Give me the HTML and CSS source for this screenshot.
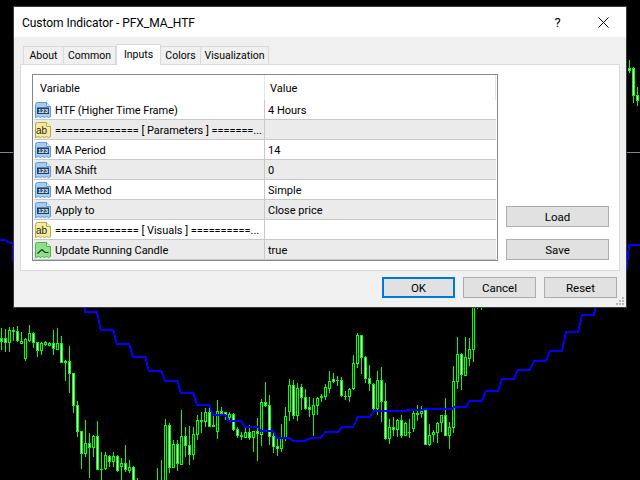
FILE: index.html
```html
<!DOCTYPE html>
<html lang="en">
<head>
<meta charset="utf-8">
<title>Custom Indicator - PFX_MA_HTF</title>
<link rel="stylesheet" href="styles.css">
</head>
<body>
<svg class="chart" viewBox="0 0 1920 1440" aria-hidden="true">
  <defs>
    <symbol id="page-num" viewBox="0 0 16 16">
      <path class="icon-num-page" d="M.5 2.5a2 2 0 0 1 2-2h9l4 4v10l-2 1-2-1-2 1-2-1-2 1-2-1-3 1z"/>
      <path class="icon-num-fold" d="M11.500 .5v4h4"/>
      <rect class="icon-num-plate" x="2" y="5.500" width="12" height="6.500"/>
    </symbol>
    <symbol id="page-str" viewBox="0 0 16 16">
      <path class="icon-str-page" d="M.5 2.5a2 2 0 0 1 2-2h9l4 4v10l-2 1-2-1-2 1-2-1-2 1-2-1-3 1z"/>
      <path class="icon-str-fold" d="M11.500 .5v4h4"/>
    </symbol>
    <symbol id="page-bool" viewBox="0 0 16 16">
      <path class="icon-bool-page" d="M.5 2.5a2 2 0 0 1 2-2h9l4 4v10l-2 1-2-1-2 1-2-1-2 1-2-1-3 1z"/>
      <path class="icon-bool-fold" d="M11.500 .5v4h4"/>
      <path class="icon-bool-mark" d="M2.500 11.500l4.500-4 3 3h3.500"/>
    </symbol>
  </defs>
  <path class="level" d="M0 457.5H1920"/>
  <g transform="translate(0 900)">
    <path class="wick" d="M4.5 84V150M16.5 87V157M28.5 80V155M40.5 80V122M52.5 78V126M64.5 96V132M76.5 115V182M88.5 75V125M100.5 97V145M112.5 125V170M124.5 125V165M136.5 122V137M148.5 125V137M160.5 90V165M172.5 84V150M184.5 108V188M196.5 180V243M208.5 138V278M220.5 218V340M232.5 304V412M244.5 393V506M256.5 360V470M268.5 400V533M280.5 405V470M292.5 363V510M304.5 455V540M316.5 455V510M328.5 465V500M340.5 455V500M352.5 465V515M364.5 475V540M376.5 435V515M388.5 480V520M400.5 498V540M412.5 535V540M472.5 505V540M484.5 480V540M496.5 357V540M508.5 370V520M520.5 420V505M532.5 420V512M544.5 330V495M556.5 380V470M568.5 378V495M580.5 380V480M592.5 345V420M604.5 335V400M616.5 325V380M628.5 315V380M640.5 345V380M652.5 300V417M664.5 320V345M676.5 336V360M688.5 335V360M700.5 338V392M712.5 382V415M724.5 395V420M736.5 378V415M748.5 375V420M760.5 392V456M772.5 355V482M784.5 297V438M796.5 247V320M808.5 285V435M820.5 400V458M832.5 415V467M844.5 373V455M856.5 320V424M868.5 237V362M880.5 240V358M892.5 250V362M904.5 252V330M916.5 268V330M928.5 292V350M940.5 293V408M952.5 290V345M964.5 282V305M976.5 252V300M988.5 213V280M1000.5 220V250M1012.5 228V258M1024.5 232V290M1036.5 274V300M1048.5 265V306M1060.5 165V270M1072.5 99V205M1084.5 105V222M1096.5 168V250M1108.5 195V272M1120.5 250V330M1132.5 213V345M1144.5 202V365M1156.5 250V420M1168.5 357V432M1180.5 352V408M1192.5 358V411M1204.5 345V413M1216.5 365V408M1228.5 357V414M1240.5 333V395M1252.5 315V362M1264.5 318V354M1276.5 330V435M1288.5 372V437M1300.5 390V425M1312.5 365V430M1324.5 345V395M1336.5 294V408M1348.5 365V446M1360.5 198V398M1372.5 111V267M1384.5 160V270M1396.5 111V228M1408.5 114V198M1420.5 0V186M1432.5 0V27M1444.5 0V30M1888.5 -720V-682M1900.5 -700V-590M1912.5 -638V-582"/>
    <path class="body-hollow" d="M25.5 92h6v36h-6zM61.5 123h6v8h-6zM73.5 118h6v58h-6zM85.5 100h6v20h-6zM121.5 130h6v22h-6zM133.5 126h6v8h-6zM145.5 130h6v5h-6zM169.5 130h6v17h-6zM253.5 430h6v30h-6zM277.5 408h6v35h-6zM313.5 466h6v40h-6zM337.5 468h6v17h-6zM361.5 490h6v10h-6zM385.5 502h6v8h-6zM493.5 375h6v170h-6zM517.5 432h6v70h-6zM541.5 408h6v85h-6zM577.5 403h6v60h-6zM589.5 360h6v43h-6zM613.5 336h6v29h-6zM649.5 335h6v60h-6zM685.5 343h6v9h-6zM733.5 397h6v14h-6zM757.5 394h6v18h-6zM781.5 306h6v97h-6zM841.5 415h6v30h-6zM853.5 350h6v64h-6zM865.5 256h6v79h-6zM889.5 265h6v81h-6zM937.5 317h6v26h-6zM949.5 295h6v22h-6zM973.5 262h6v28h-6zM985.5 244h6v22h-6zM1045.5 268h6v22h-6zM1057.5 190h6v76h-6zM1069.5 106h6v84h-6zM1129.5 241h6v85h-6zM1165.5 382h6v34h-6zM1189.5 361h6v28h-6zM1213.5 370h6v36h-6zM1237.5 340h6v46h-6zM1261.5 334h6v7h-6zM1285.5 406h6v28h-6zM1297.5 397h6v6h-6zM1309.5 370h6v27h-6zM1321.5 347h6v21h-6zM1345.5 383h6v23h-6zM1357.5 244h6v138h-6zM1369.5 163h6v81h-6zM1393.5 172h6v54h-6zM1405.5 148h6v28h-6zM1417.5 0h6v148h-6z"/>
    <path class="body-solid" d="M1.5 115h6v10h-6zM13.5 115h6v13h-6zM37.5 90h6v5h-6zM49.5 95h6v27h-6zM97.5 100h6v28h-6zM109.5 127h6v25h-6zM157.5 130h6v16h-6zM181.5 130h6v58h-6zM193.5 184h6v4h-6zM205.5 184h6v36h-6zM217.5 220h6v97h-6zM229.5 317h6v78h-6zM241.5 394h6v66h-6zM265.5 430h6v13h-6zM289.5 408h6v100h-6zM301.5 507h6v2h-6zM325.5 468h6v17h-6zM349.5 468h6v44h-6zM373.5 490h6v18h-6zM397.5 502h6v43h-6zM505.5 375h6v127h-6zM529.5 432h6v58h-6zM553.5 408h6v28h-6zM565.5 436h6v27h-6zM601.5 360h6v5h-6zM625.5 336h6v44h-6zM637.5 376h6v4h-6zM661.5 334h6v6h-6zM673.5 337h6v8h-6zM697.5 344h6v44h-6zM709.5 388h6v19h-6zM721.5 405h6v5h-6zM745.5 397h6v16h-6zM769.5 394h6v6h-6zM793.5 307h6v8h-6zM805.5 317h6v92h-6zM817.5 409h6v31h-6zM829.5 440h6v6h-6zM877.5 256h6v89h-6zM901.5 262h6v31h-6zM913.5 293h6v32h-6zM925.5 322h6v7h-6zM961.5 288h6v4h-6zM997.5 238h6v7h-6zM1009.5 240h6v2h-6zM1021.5 241h6v46h-6zM1033.5 288h6v2h-6zM1081.5 106h6v66h-6zM1093.5 172h6v64h-6zM1105.5 236h6v14h-6zM1117.5 253h6v73h-6zM1141.5 241h6v63h-6zM1153.5 304h6v112h-6zM1177.5 382h6v6h-6zM1201.5 361h6v46h-6zM1225.5 396h6v2h-6zM1249.5 340h6v2h-6zM1273.5 332h6v102h-6zM1333.5 347h6v59h-6zM1381.5 163h6v61h-6zM1885.5 -696h6v8h-6zM1897.5 -695h6v82h-6zM1909.5 -613h6v15h-6z"/>
    <path class="trend" d="M0 -180H15L30 -171H39L42 -60M254 0V36H290L296 60L302 90H340L350 132H388L398 170H436L446 212H484L494 242H532L542 278H580L590 314H628L638 344H676L686 362H724L734 380H772L782 392H820L830 413H868L878 422H916L932 414H960L976 396H1014L1026 380H1060L1074 350H1110L1122 332H1218L1220 329H1266L1270 326H1356L1366 320H1398L1410 302H1446L1458 272H1494L1506 236H1542L1554 210H1590L1602 182H1638L1650 152H1686L1698 96H1734L1746 44H1782L1786 22L1790 0L1878 -75L1887 -165H1920"/>
  </g>
</svg>

<main class="dialog">
  <header class="titlebar">
    <span class="title">Custom Indicator - PFX_MA_HTF</span>
    <span class="caption-btn help">?</span>
    <span class="caption-btn close">
      <svg class="close-glyph" viewBox="0 0 11 11" aria-hidden="true"><path d="M.5 .5l10 10M10.500 .5l-10 10"/></svg>
    </span>
  </header>

  <nav class="tabs">
    <span class="tab tab-about">About</span>
    <span class="tab tab-common">Common</span>
    <span class="tab tab-inputs active">Inputs</span>
    <span class="tab tab-colors">Colors</span>
    <span class="tab tab-vis">Visualization</span>
  </nav>

  <section class="panel">
    <div class="list">
      <div class="list-head">
        <span class="head-cell head-var">Variable</span>
        <span class="head-cell head-val">Value</span>
      </div>
      <div class="row">
        <span class="name"><svg class="icon" viewBox="0 0 16 16"><use href="#page-num"/><text class="icon-num-text" x="8" y="10.800">123</text></svg>HTF (Higher Time Frame)</span>
        <span class="value">4 Hours</span>
      </div>
      <div class="row alt">
        <span class="name"><svg class="icon" viewBox="0 0 16 16"><use href="#page-str"/><text class="icon-str-text" x="6.500" y="11.500">ab</text></svg>============== [ Parameters ] =======...</span>
        <span class="value"></span>
      </div>
      <div class="row">
        <span class="name"><svg class="icon" viewBox="0 0 16 16"><use href="#page-num"/><text class="icon-num-text" x="8" y="10.800">123</text></svg>MA Period</span>
        <span class="value">14</span>
      </div>
      <div class="row alt">
        <span class="name"><svg class="icon" viewBox="0 0 16 16"><use href="#page-num"/><text class="icon-num-text" x="8" y="10.800">123</text></svg>MA Shift</span>
        <span class="value">0</span>
      </div>
      <div class="row">
        <span class="name"><svg class="icon" viewBox="0 0 16 16"><use href="#page-num"/><text class="icon-num-text" x="8" y="10.800">123</text></svg>MA Method</span>
        <span class="value">Simple</span>
      </div>
      <div class="row alt">
        <span class="name"><svg class="icon" viewBox="0 0 16 16"><use href="#page-num"/><text class="icon-num-text" x="8" y="10.800">123</text></svg>Apply to</span>
        <span class="value">Close price</span>
      </div>
      <div class="row">
        <span class="name"><svg class="icon" viewBox="0 0 16 16"><use href="#page-str"/><text class="icon-str-text" x="6.500" y="11.500">ab</text></svg>============== [ Visuals ] ==========...</span>
        <span class="value"></span>
      </div>
      <div class="row alt">
        <span class="name"><svg class="icon" viewBox="0 0 16 16"><use href="#page-bool"/></svg>Update Running Candle</span>
        <span class="value">true</span>
      </div>
    </div>
    <div class="side">
      <button class="btn side-btn" type="button">Load</button>
      <button class="btn side-btn" type="button">Save</button>
    </div>
  </section>

  <footer class="actions">
    <button class="btn act-btn default" type="button">OK</button>
    <button class="btn act-btn" type="button">Cancel</button>
    <button class="btn act-btn" type="button">Reset</button>
  </footer>

  <svg class="grip" viewBox="0 0 9 9" aria-hidden="true"><path d="M6 0h2v2h-2zM3 3h2v2h-2zM6 3h2v2h-2zM0 6h2v2h-2zM3 6h2v2h-2zM6 6h2v2h-2z"/></svg>
</main>
</body>
</html>
```

FILE: styles.css
```css
* { box-sizing: border-box; }

html, body {
  margin: 0;
  height: 100%;
  background: #000;
  overflow: hidden;
}

body {
  position: relative;
  font: 11px/1 Roboto, "Liberation Sans", sans-serif;
  color: #000;
}

.chart {
  position: absolute;
  left: 0;
  top: 0;
  width: 640px;
  height: 480px;
  shape-rendering: crispEdges;
}

.level { stroke: #778899; stroke-width: 3; fill: none; }
.wick { stroke: #00ff00; stroke-width: 3; fill: none; }
.body-hollow { stroke: #00ff00; stroke-width: 3; fill: #000; }
.body-solid { stroke: #00ff00; stroke-width: 3; fill: #fff; }
.trend { stroke: #0000ff; stroke-width: 6; fill: none; stroke-linejoin: miter; }

.dialog {
  position: absolute;
  left: 14px;
  top: 7px;
  width: 612px;
  height: 300px;
  background: #f0f0f0;
  box-shadow: 0 0 0 1px #3c3c3c;
  display: flex;
  flex-direction: column;
}

.titlebar {
  height: 30px;
  background: #fff;
  display: flex;
  align-items: center;
  flex: none;
}

.title {
  flex: 1;
  padding: 1px 0 0 8px;
  font-size: 12px;
  letter-spacing: -.05px;
}

.caption-btn {
  width: 45px;
  height: 30px;
  display: flex;
  align-items: center;
  justify-content: center;
}

.help { font-size: 13px; margin-right: 1px; }

.close-glyph {
  width: 11px;
  height: 11px;
  stroke: #000;
  stroke-width: 1;
  fill: none;
}

.tabs {
  display: flex;
  align-items: flex-end;
  height: 20px;
  margin: 7px 0 0 9px;
  position: relative;
  z-index: 1;
  flex: none;
}

.tab {
  height: 18px;
  padding-top: 2px;
  border: 1px solid #d9d9d9;
  border-bottom: 0;
  border-left-width: 0;
  display: flex;
  align-items: center;
  justify-content: center;
  background: #f0f0f0;
  font-size: 10.500px;
}

.tab-about { width: 41px; border-left-width: 1px; }
.tab-common { width: 52px; }
.tab-inputs { width: 45px; }
.tab-colors { width: 40px; }
.tab-vis { width: 68px; }

.tab.active {
  height: 21px;
  margin-bottom: -1px;
  padding: 1px 0 0;
  background: #fff;
  border-left-width: 1px;
}

.panel {
  height: 207px;
  margin: 0 6px;
  padding: 9px 10px 9px 11px;
  border: 1px solid #d9d9d9;
  background: #fff;
  display: flex;
  gap: 8px;
  flex: none;
}

.list {
  width: 466px;
  height: 187px;
  border: 1px solid #828790;
  padding: 0 1px;
  background: #fff;
  flex: none;
}

.list-head {
  height: 25px;
  display: grid;
  grid-template-columns: 231px 1fr;
  align-items: stretch;
}

.head-cell {
  display: flex;
  align-items: center;
  padding-top: 2px;
  border-right: 1px solid #e5e5e5;
}

.head-var { padding-left: 6px; }
.head-val { padding-left: 5px; }

.row {
  height: 20px;
  display: grid;
  grid-template-columns: 231px 1fr;
  border-bottom: 1px solid #c8c8c8;
}

.row.alt { background: #ebebeb; }

.name {
  display: flex;
  align-items: center;
  gap: 4px;
  padding: 2px 0 0 1px;
  border-right: 1px solid #c8c8c8;
  white-space: nowrap;
  overflow: hidden;
  letter-spacing: -.05px;
}

.value {
  display: flex;
  align-items: center;
  padding: 2px 0 0 3px;
}

.icon {
  width: 16px;
  height: 16px;
  margin-top: -1px;
  flex: none;
}

.icon-num-page { fill: #a9cdf0; stroke: #5a9bd8; stroke-width: 1; }
.icon-num-fold { fill: #e6f1fb; stroke: #5a9bd8; stroke-width: 1; }
.icon-num-plate { fill: #1d3f66; }
.icon-num-text {
  font: bold 6px "Liberation Sans", sans-serif;
  letter-spacing: 0;
  fill: #fff;
  text-anchor: middle;
}

.icon-str-page { fill: #f5ec9f; stroke: #b7a840; stroke-width: 1; }
.icon-str-fold { fill: #fdf9dc; stroke: #b7a840; stroke-width: 1; }
.icon-str-text {
  font: 10px "Liberation Sans", sans-serif;
  letter-spacing: 0;
  fill: #1e1e1e;
  text-anchor: middle;
}

.icon-bool-page { fill: #8fe08c; stroke: #4fb04c; stroke-width: 1; }
.icon-bool-fold { fill: #dcf7da; stroke: #4fb04c; stroke-width: 1; }
.icon-bool-mark { fill: none; stroke: #0f3d0e; stroke-width: 1.200; }

.side {
  width: 103px;
  display: flex;
  flex-direction: column;
  justify-content: flex-end;
  gap: 12px;
  padding-bottom: 1px;
  flex: none;
}

.btn {
  height: 21px;
  padding: 2px 0 0;
  border: 1px solid #adadad;
  background: #e1e1e1;
  color: #000;
  font: 11.500px/1 Roboto, "Liberation Sans", sans-serif;
  display: flex;
  align-items: center;
  justify-content: center;
}

.actions {
  display: flex;
  justify-content: flex-end;
  gap: 8px;
  margin-top: 6px;
  padding-right: 9px;
  flex: none;
}

.act-btn { width: 73px; }

.default {
  border: 2px solid #0078d7;
}

.grip {
  position: absolute;
  right: 1px;
  bottom: 1px;
  width: 9px;
  height: 9px;
  fill: #b8b8b8;
}
```
